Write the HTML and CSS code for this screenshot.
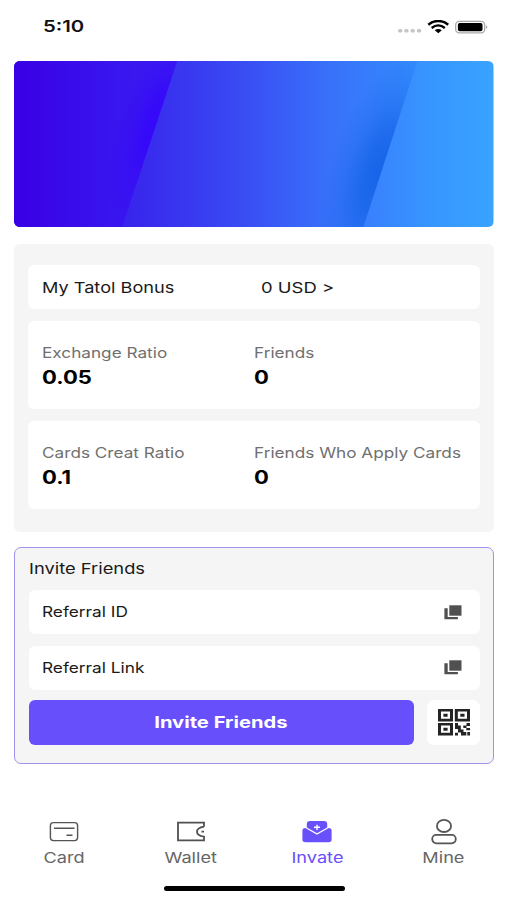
FILE: index.html
```html
<!DOCTYPE html>
<html lang="en">
<head>
<meta charset="utf-8">
<title>Invite</title>
<link rel="stylesheet" href="styles.css">
</head>
<body>
<div class="screen">
  <header class="status">
    <span class="wide time">5:10</span>
    <svg class="status-icons" width="92" height="16" viewBox="0 0 92 16">
      <g fill="#c6c6c6"><rect x="1" y="9" width="4.4" height="3.4" rx="1.5"/><rect x="7.2" y="9" width="4.4" height="3.4" rx="1.5"/><rect x="13.5" y="9" width="4.4" height="3.4" rx="1.5"/><rect x="19.8" y="9" width="4.4" height="3.4" rx="1.5"/></g>
      <g fill="none" stroke="#000" stroke-width="2.5"><path d="M31.3 4.7C37-.2 45.600-.2 51.200 4.700"/><path d="M34.700 8C38.700 4.700 43.800 4.700 47.800 8"/></g>
      <path d="M37.700 10.200Q41.300 7.600 44.800 10.200L41.300 13.200Z"/>
      <rect x="58.700" y="1.300" width="29" height="11.600" rx="3.600" fill="#fff" stroke="#a9a9a9" stroke-width="1.300"/>
      <rect x="60.900" y="3" width="24.600" height="8.300" rx="1.800"/>
      <path d="M89.200 5.200Q91.500 7 89.200 9Z" fill="#999"/>
    </svg>
  </header>

  <main>
    <svg class="banner" viewBox="0 0 479 166" preserveAspectRatio="none">
      <defs>
        <linearGradient id="left" x1="0" x2="163" gradientUnits="userSpaceOnUse"><stop offset="0" stop-color="#3900e5"/><stop offset=".55" stop-color="#3913ee"/><stop offset="1" stop-color="#3a1df0"/></linearGradient>
        <linearGradient id="middle" x1="108" x2="400" gradientUnits="userSpaceOnUse"><stop offset="0" stop-color="#3823ec"/><stop offset=".35" stop-color="#3945f2"/><stop offset=".7" stop-color="#3870fa"/><stop offset="1" stop-color="#348bfd"/></linearGradient>
        <linearGradient id="right" x1="349" x2="479" gradientUnits="userSpaceOnUse"><stop offset="0" stop-color="#397ffd"/><stop offset=".55" stop-color="#3797ff"/><stop offset="1" stop-color="#39a3ff"/></linearGradient>
        <radialGradient id="violet" cx="0" cy="0" r="1" gradientUnits="userSpaceOnUse" gradientTransform="translate(142 66) rotate(18) scale(38 105)"><stop offset="0" stop-color="#3507fa"/><stop offset=".3" stop-color="#3507fa" stop-opacity=".8"/><stop offset=".65" stop-color="#3507fa" stop-opacity=".3"/><stop offset="1" stop-color="#3507fa" stop-opacity="0"/></radialGradient>
        <radialGradient id="shade" cx="0" cy="0" r="1" gradientUnits="userSpaceOnUse" gradientTransform="translate(366 113) rotate(18) scale(52 125)"><stop offset="0" stop-color="#1764e8"/><stop offset=".3" stop-color="#1764e8" stop-opacity=".8"/><stop offset=".65" stop-color="#1764e8" stop-opacity=".3"/><stop offset="1" stop-color="#1764e8" stop-opacity="0"/></radialGradient>
      </defs>
      <rect width="479" height="166" fill="url(#right)"/>
      <path d="M0 0H403L349 166H0Z" fill="url(#middle)"/>
      <path d="M0 0H403L349 166H0Z" fill="url(#shade)"/>
      <path d="M0 0H163L108 166H0Z" fill="url(#left)"/>
      <path d="M0 0H163L108 166H0Z" fill="url(#violet)"/>
    </svg>

    <section class="stats">
      <div class="bonus"><span class="wide text">My Tatol Bonus</span><span class="wide text amount">0 USD &gt;</span></div>
      <div class="pair">
        <div><span class="wide label">Exchange Ratio</span><span class="wide value">0.05</span></div>
        <div><span class="wide label">Friends</span><span class="wide value">0</span></div>
      </div>
      <div class="pair">
        <div><span class="wide label">Cards Creat Ratio</span><span class="wide value">0.1</span></div>
        <div><span class="wide label">Friends Who Apply Cards</span><span class="wide value">0</span></div>
      </div>
    </section>

    <section class="invite">
      <h2><span class="wide text">Invite Friends</span></h2>
      <div class="field"><span class="wide text ref">Referral ID</span>
        <svg width="18" height="15" viewBox="0 0 18 15" fill="#505050"><rect x="5.300" y=".3" width="12.200" height="10.400"/><path d="M.4 3.200H3.700V11.900H13.900V14.200H.4Z"/></svg></div>
      <div class="field"><span class="wide text ref">Referral Link</span>
        <svg width="18" height="15" viewBox="0 0 18 15" fill="#505050"><rect x="5.300" y=".3" width="12.200" height="10.400"/><path d="M.4 3.200H3.700V11.900H13.900V14.200H.4Z"/></svg></div>
      <div class="actions">
        <button class="primary"><span class="wide">Invite Friends</span></button>
        <button class="qr" aria-label="QR code">
          <svg width="32" height="27" viewBox="0 0 32 27" fill="#242424">
            <path fill-rule="evenodd" d="M0 0H15V12.400H0ZM3 2.600V9.800H12V2.600ZM16.800 0H32V12.400H16.800ZM19.800 2.600V9.800H29V2.600ZM0 14H15V26.400H0ZM3 16.600V23.800H12V16.600Z"/>
            <path d="M5.400 4.700H9.600V7.700H5.400ZM22.300 4.700H26.500V7.700H22.300ZM5.400 18.700H9.600V21.700H5.400Z"/>
            <path d="M17 14H20V16.500H22.800V20.500H25.500V23H28.300V26.400H23V23.500H20V20H17ZM17 23.700H20V26.400H17ZM28.500 14H32V17H28.500ZM25.300 16.500H28.500V19H25.300ZM28.300 19H32V21.300H28.300ZM29.300 23H32V26.400H29.300Z"/>
          </svg>
        </button>
      </div>
    </section>
  </main>

  <nav class="tabs">
    <a class="tab"><svg width="30" height="27" viewBox="0 0 30 27" fill="none" stroke="#555" stroke-width="1.400"><rect x="1.400" y="4.600" width="27.200" height="18" rx="3"/><path d="M5 10.300H25.500M17.500 17.200H23.500"/></svg><span class="wide">Card</span></a>
    <a class="tab"><svg width="30" height="27" viewBox="0 0 30 27" fill="none" stroke="#505050" stroke-width="1.800"><path d="M28 8.700V4.700H2V22.300H28V18.700Q21 17.500 21 13.700Q21 9.900 28 8.700M25.500 13.700H28"/></svg><span class="wide">Wallet</span></a>
    <a class="tab active"><svg width="30" height="27" viewBox="0 0 30 27" fill="#6850fb"><path d="M4.800 9.500V6Q4.800 3 8 3H22Q25.200 3 25.200 6V9.500L15 15.200Z"/><path d="M3.300 10L15 16.800 26.700 10Q29.600 10 29.600 12.500V21.500Q29.600 24.200 26.500 24.200H3.500Q.4 24.200 .4 21.500V12.500Q.4 10 3.300 10Z"/><path d="M15 6.700V11.900M12 9.300H18" stroke="#fff" stroke-width="1.400"/></svg><span class="wide">Invate</span></a>
    <a class="tab"><svg width="30" height="27" viewBox="0 0 30 27" fill="none" stroke="#555" stroke-width="1.800"><ellipse cx="15" cy="7.900" rx="7.100" ry="6.100"/><rect x="3.200" y="16.900" width="23.600" height="8.400" rx="4.200"/></svg><span class="wide">Mine</span></a>
  </nav>
  <div class="home"></div>
</div>
</body>
</html>
```
FILE: styles.css
```css
* { box-sizing: border-box; }
body { margin: 0; background: #fff; color: #111; font-family: Inter, "Liberation Sans", sans-serif; }
.screen { width: 507px; height: 900px; overflow: hidden; display: flex; flex-direction: column; }
.wide { display: inline-block; white-space: nowrap; transform: scaleX(1.21); transform-origin: left center; }

.status { height: 60.500px; padding: 16px 18px 0 43px; display: flex; justify-content: space-between; align-items: flex-start; }
.time { font-size: 16px; line-height: 21px; font-weight: 600; transform: scaleX(1.27); }
.status-icons { margin-top: 3.500px; }

main { padding: 0 13px 0 14px; }
.banner { display: block; width: 479.500px; height: 166px; margin-bottom: 17px; border-radius: 6px; }

.stats { height: 288px; padding: 21.500px 14px; border-radius: 6px; background: #f5f5f5; display: flex; flex-direction: column; gap: 12px; }
.bonus { height: 44px; border-radius: 6px; background: #fff; display: grid; grid-template-columns: 219.500px 1fr; align-items: center; padding: 2px 0 0 13.500px; }
.text { font-size: 15px; line-height: 20px; }
.amount { transform: scaleX(1.23); }
.bonus .text, .field, h2 { color: #1a1a1a; }
.pair { height: 88px; border-radius: 6px; background: #fff; display: grid; grid-template-columns: 212.500px 1fr; padding: 21px 0 0 13.500px; }
.pair > div { display: flex; flex-direction: column; align-items: flex-start; }
.label { font-size: 14.500px; line-height: 22px; color: #707070; transform: scaleX(1.185); }
.value { font-size: 18.500px; line-height: 27px; font-weight: 700; color: #000; transform: scaleX(1.19); }

.invite { margin-top: 15.500px; width: 480px; height: 217px; padding: 0 13px 0 14px; border: 1.400px solid #a091ec; border-radius: 7px; background: #f5f5f5; }
h2 { height: 42px; margin: 0; padding-top: 11px; font-weight: 400; font-size: 15px; line-height: 20px; }
h2 .wide { transform: scaleX(1.22); }
.field { height: 44px; margin-bottom: 11.500px; padding: 0 18px 0 13px; border-radius: 6px; background: #fff; display: flex; align-items: center; justify-content: space-between; }
.ref { font-size: 14.500px; transform: scaleX(1.19); }
.actions { display: flex; gap: 13.500px; margin-top: -12.500px; padding-top: 11.500px; }
button { border: 0; padding: 0; font: inherit; height: 44.500px; display: flex; align-items: center; justify-content: center; }
.primary { width: 384.500px; border-radius: 6px; background: #674ffb; color: #fff; font-size: 16px; font-weight: 700; }
.primary .wide, .tab .wide { transform-origin: center; }
.primary .wide { transform: scaleX(1.26); }
.qr { flex: 1; border-radius: 7px; background: #fff; }

.tabs { margin-top: 54px; padding-left: 1px; display: grid; grid-template-columns: repeat(4, 126.500px); }
.tab { display: flex; flex-direction: column; align-items: center; gap: 2px; font-size: 15px; line-height: 22px; color: #666; }
.tab.active { color: #6850fb; }
.home { width: 181px; height: 5.500px; margin: 16.500px 0 0 163.500px; border-radius: 3px; background: #000; }
```
